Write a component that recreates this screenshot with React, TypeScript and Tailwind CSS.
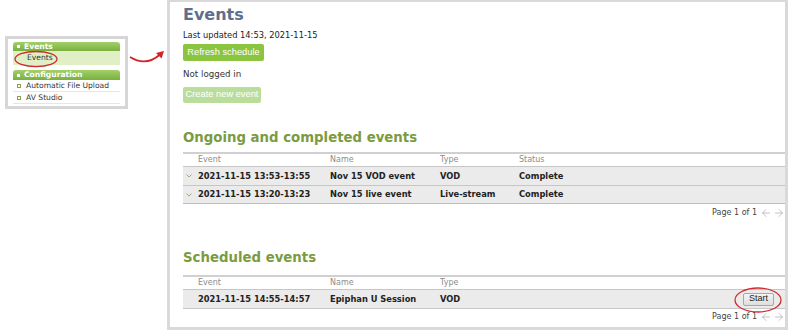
import { ArrowLeft, ArrowRight } from "lucide-react";

const ongoing = [
  { event: "2021-11-15 13:53-13:55", name: "Nov 15 VOD event", type: "VOD", status: "Complete" },
  { event: "2021-11-15 13:20-13:23", name: "Nov 15 live event", type: "Live-stream", status: "Complete" },
];

function Chevron() {
  return (
    <svg width="6" height="4" viewBox="0 0 6 4" className="block">
      <polyline points="0.5,0.5 3,3 5.5,0.5" fill="none" stroke="#92b277" strokeWidth="1" />
    </svg>
  );
}

function Pager() {
  return (
    <div className="flex items-center justify-end gap-[1px] text-[8px] leading-[12px] text-[#444]">
      <span className="mr-[2px]">Page 1 of 1</span>
      <ArrowLeft size={12} strokeWidth={1.4} className="text-[#a9a9a9]" />
      <ArrowRight size={12} strokeWidth={1.4} className="text-[#a9a9a9]" />
    </div>
  );
}

function HeaderRow({ status }: { status: boolean }) {
  return (
    <div className="flex h-[12px] items-center text-[8px] text-[#8c8c8c]">
      <div className="w-[15px]" />
      <div className="w-[132px]">Event</div>
      <div className="w-[110px]">Name</div>
      <div className="w-[79px]">Type</div>
      {status && <div className="flex-1">Status</div>}
    </div>
  );
}

function Sidebar() {
  return (
    <div className="ml-[5px] mt-[36px] w-[123px] border-[3px] border-[#d6d6d6] bg-white px-[5px] pb-[2px] pt-[3px] text-[7.6px]">
      <div className="flex h-[9px] items-center gap-[4px] rounded-t-[3px] bg-gradient-to-b from-[#a2cf6a] to-[#7bb03b] pl-[4px] font-bold text-white">
        <span className="h-[3px] w-[3px] bg-white" />
        <span>Events</span>
      </div>
      <div className="flex h-[14px] items-center bg-[#e0efc6] pl-[14px] text-[#333]">Events</div>
      <div className="mt-[5px] flex h-[10px] items-center gap-[4px] rounded-t-[3px] bg-gradient-to-b from-[#a2cf6a] to-[#7bb03b] pl-[4px] font-bold text-white">
        <span className="h-[3px] w-[3px] bg-white" />
        <span>Configuration</span>
      </div>
      {["Automatic File Upload", "AV Studio"].map((item) => (
        <div key={item} className="flex h-[12px] items-center gap-[5px] border-b border-[#e6e6e6] pl-[4px] text-[#333]">
          <span className="h-[4px] w-[4px] border border-[#8e9c55]" />
          <span>{item}</span>
        </div>
      ))}
    </div>
  );
}

export default function App() {
  return (
    <div className="relative flex h-[330px] w-[792px] overflow-hidden bg-white font-['DejaVu_Sans',Verdana,sans-serif] text-[#222]">
      <div className="w-[167px] shrink-0">
        <Sidebar />
      </div>

      <main className="h-[330px] w-[621px] shrink-0 border-b-[3px] border-l-[3px] border-r-[3px] border-t-2 border-[#d9d9d9] pl-[13px]">
        <h1 className="mt-[3px] text-[16px] font-bold leading-[20px] text-[#5d6f8d]">Events</h1>
        <p className="mt-[4px] text-[8.3px] leading-[12px] text-[#222]">Last updated 14:53, 2021-11-15</p>
        <button className="mt-[3px] flex h-[17px] w-[81px] items-center justify-center rounded-[2px] bg-[#8bc43f] font-['Liberation_Sans',Arial,sans-serif] text-[9.3px] text-white">
          Refresh schedule
        </button>
        <p className="mt-[7px] text-[8.7px] leading-[12px] text-[#333]">Not logged in</p>
        <button className="mt-[7px] flex h-[16px] w-[78px] items-center justify-center rounded-[2px] bg-[#badd9b] font-['Liberation_Sans',Arial,sans-serif] text-[9.3px] text-white">
          Create new event
        </button>

        <h2 className="mt-[27px] text-[13.3px] font-bold leading-[16px] text-[#7b9b3f]">Ongoing and completed events</h2>
        <div className="mt-[6px] border-t-2 border-[#d0d0d0]">
          <HeaderRow status />
          {ongoing.map((row, i) => (
            <div
              key={row.event}
              className={`flex h-[19px] items-center border-t border-[#c6c6c6] bg-[#ebebeb] text-[8.3px] font-bold text-[#222] ${
                i === ongoing.length - 1 ? "border-b border-b-[#bdbdbd]" : ""
              }`}
            >
              <div className="w-[15px] shrink-0 pl-[3px]">
                <Chevron />
              </div>
              <div className="w-[132px] shrink-0 whitespace-nowrap">{row.event}</div>
              <div className="w-[110px] shrink-0 whitespace-nowrap">{row.name}</div>
              <div className="w-[79px] shrink-0 whitespace-nowrap">{row.type}</div>
              <div className="flex-1">{row.status}</div>
            </div>
          ))}
        </div>
        <div className="mt-[3px]">
          <Pager />
        </div>

        <h2 className="mt-[31px] text-[13.3px] font-bold leading-[16px] text-[#7b9b3f]">Scheduled events</h2>
        <div className="mt-[9px] border-t-2 border-[#d0d0d0]">
          <HeaderRow status={false} />
          <div className="flex h-[20px] items-center border-y border-[#c6c6c6] bg-[#ebebeb] text-[8.3px] font-bold text-[#222]">
            <div className="w-[15px] shrink-0" />
            <div className="w-[132px] shrink-0 whitespace-nowrap">2021-11-15 14:55-14:57</div>
            <div className="w-[110px] shrink-0 whitespace-nowrap">Epiphan U Session</div>
            <div className="w-[79px] shrink-0">VOD</div>
            <div className="flex flex-1 justify-end pr-[11px]">
              <button className="flex h-[13px] w-[31px] items-center justify-center rounded-[2px] border border-[#a8a8a8] bg-gradient-to-b from-[#f4f4f4] to-[#dedede] font-['Liberation_Sans',Arial,sans-serif] text-[9px] font-normal text-[#222]">
                Start
              </button>
            </div>
          </div>
        </div>
        <div className="mt-[2px]">
          <Pager />
        </div>
      </main>

      {/* annotations: red circles and arrow */}
      <svg className="pointer-events-none absolute left-0 top-0" width="792" height="330">
        <ellipse cx="36" cy="59" rx="21" ry="7.5" fill="none" stroke="#cf2a2f" strokeWidth="1.3" />
        <ellipse cx="758" cy="300" rx="23" ry="12" fill="none" stroke="#cf2a2f" strokeWidth="1.3" />
        <path d="M130 57 Q146 67 160 54.5" fill="none" stroke="#d2232a" strokeWidth="1.8" />
        <polygon points="164,51 156,53 161.5,58.5" fill="#d2232a" />
      </svg>
    </div>
  );
}
